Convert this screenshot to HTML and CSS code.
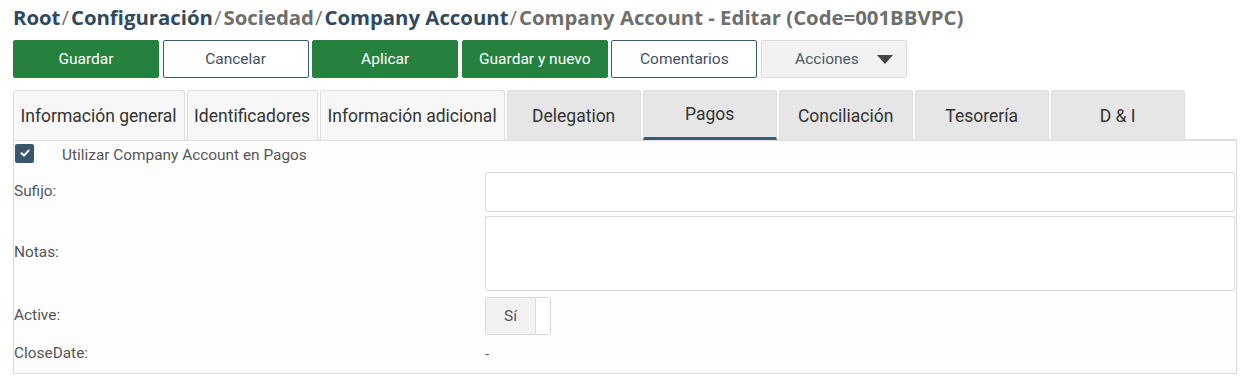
FILE: index.html
```html
<!DOCTYPE html>
<html lang="es">
<head>
<meta charset="utf-8">
<link rel="stylesheet" href="styles.css">
</head>
<body>
<div class="page">
  <h1 class="crumbs">
    <span class="c-link">Root</span><span class="sep">/</span><span class="c-link">Configuración</span><span class="sep">/</span><span class="c-muted">Sociedad</span><span class="sep">/</span><span class="c-link">Company Account</span><span class="sep">/</span><span class="c-muted">Company Account - Editar (Code=001BBVPC)</span>
  </h1>
  <div class="toolbar">
    <button class="btn btn-primary">Guardar</button>
    <button class="btn btn-outline">Cancelar</button>
    <button class="btn btn-primary">Aplicar</button>
    <button class="btn btn-primary">Guardar y nuevo</button>
    <button class="btn btn-outline">Comentarios</button>
    <button class="btn btn-light">Acciones <span class="caret"></span></button>
  </div>
  <div class="tabs">
    <div class="tab tab-auto">Información general</div>
    <div class="tab tab-auto">Identificadores</div>
    <div class="tab tab-auto">Información adicional</div>
    <div class="tab tab-fixed">Delegation</div>
    <div class="tab tab-fixed active">Pagos</div>
    <div class="tab tab-fixed">Conciliación</div>
    <div class="tab tab-fixed">Tesorería</div>
    <div class="tab tab-fixed">D &amp; I</div>
  </div>
  <div class="panel">
    <div class="check-row">
      <span class="checkbox"><svg width="12" height="12" viewBox="0 0 12 12"><path d="M2.5 6.3 L5 8.6 L9.6 3.6" fill="none" stroke="#fff" stroke-width="2" stroke-linecap="round" stroke-linejoin="round"/></svg></span>
      <span class="check-label">Utilizar Company Account en Pagos</span>
    </div>
    <div class="form-row row-sufijo">
      <div class="label">Sufijo:</div>
      <div class="field"><div class="input"></div></div>
    </div>
    <div class="form-row row-notas">
      <div class="label">Notas:</div>
      <div class="field"><div class="textarea"></div></div>
    </div>
    <div class="form-row row-active">
      <div class="label">Active:</div>
      <div class="field"><div class="toggle"><span class="toggle-on">Sí</span><span class="toggle-off"></span></div></div>
    </div>
    <div class="form-row row-close">
      <div class="label">CloseDate:</div>
      <div class="field value">-</div>
    </div>
  </div>
</div>
</body>
</html>
```
FILE: styles.css
```css
* { box-sizing: border-box; }
html, body { margin: 0; padding: 0; background: #fff; }
body { font-family: Roboto, "Liberation Sans", sans-serif; color: #444; }
.page { padding: 5px 0 0 13px; width: 1237px; }

.crumbs {
  margin: 0;
  font-family: "Open Sans", "Liberation Sans", sans-serif;
  font-weight: 700;
  font-size: 20.35px;
  line-height: 24px;
  height: 27px;
  letter-spacing: 0;
  white-space: nowrap;
}
.c-link { color: #2f4a60; }
.c-muted { color: #6e6e6e; }
.sep { color: #777; font-weight: 400; margin: 0 2px 0 1px; }

.toolbar { display: flex; gap: 3.6px; margin-top: 8px; height: 38px; }
.btn {
  width: 146px; height: 38px; flex: none;
  font-family: Roboto, "Liberation Sans", sans-serif;
  font-size: 15.5px;
  border-radius: 2px;
  padding: 0;
  display: flex; align-items: center; justify-content: center;
}
.btn-primary { background: #26813f; border: 1px solid #26813f; color: #fff; }
.btn-outline { background: #fff; border: 1px solid #3a5871; color: #3f4f5e; }
.btn-light { background: #f2f2f2; border: 1px solid #dcdcdc; color: #4a5866; padding-right: 14px; position: relative; }
.caret {
  position: absolute; right: 13px; top: 14px;
  width: 0; height: 0;
  border-left: 8px solid transparent;
  border-right: 8px solid transparent;
  border-top: 9px solid #444;
}

.tabs { display: flex; gap: 2px; margin-top: 12px; height: 50px; }
.tab {
  height: 50px;
  border: 1px solid #dedede;
  border-bottom: none;
  border-radius: 3px 3px 0 0;
  display: flex; align-items: center; justify-content: center;
  font-size: 17.5px;
  color: #333;
  flex: none;
}
.tab-auto { background: #f7f7f7; padding: 0 7px 0 6.5px; }
.tab-fixed { background: #e6e6e6; width: 134px; color: #333; }
.tab.active { border-bottom: 3px solid #3d5a6f; }

.panel {
  border: 1px solid #dadcdc;
  border-top: 2px solid #dde0e0;
  background: #fdfdfd;
  height: 235px;
  margin-top: -1px;
  padding: 2px 0 0 0;
}
.check-row { display: flex; align-items: center; height: 20px; }
.checkbox {
  width: 19px; height: 19px; margin-left: 1px;
  background: #3a566d; border-radius: 2px;
  display: flex; align-items: center; justify-content: center;
}
.check-label { margin-left: 28px; font-size: 15.4px; color: #555; padding-top: 3px; }

.form-row { display: flex; align-items: center; }
.label { width: 471px; font-size: 15.4px; color: #555; padding-bottom: 3px; }
.field { flex: 1; padding-right: 1px; }
.row-sufijo { height: 40px; margin-top: 9px; }
.input { height: 40px; border: 1px solid #dcdcdc; background: #fff; border-radius: 2px; }
.row-notas { height: 75px; margin-top: 4px; }
.textarea { height: 75px; border: 1px solid #dcdcdc; background: #fff; border-radius: 2px; }
.row-active { height: 38px; margin-top: 6px; }
.toggle { display: flex; width: 66px; height: 38px; border: 1px solid #d9d9d9; border-radius: 3px; overflow: hidden; }
.toggle-on { width: 50px; background: #f2f2f2; border-right: 1px solid #dcdcdc; display: flex; align-items: center; justify-content: center; font-size: 15.4px; color: #555; }
.toggle-off { flex: 1; background: #fff; }
.row-close { height: 26px; margin-top: 6px; }
.value { font-size: 15.4px; color: #666; }
```
